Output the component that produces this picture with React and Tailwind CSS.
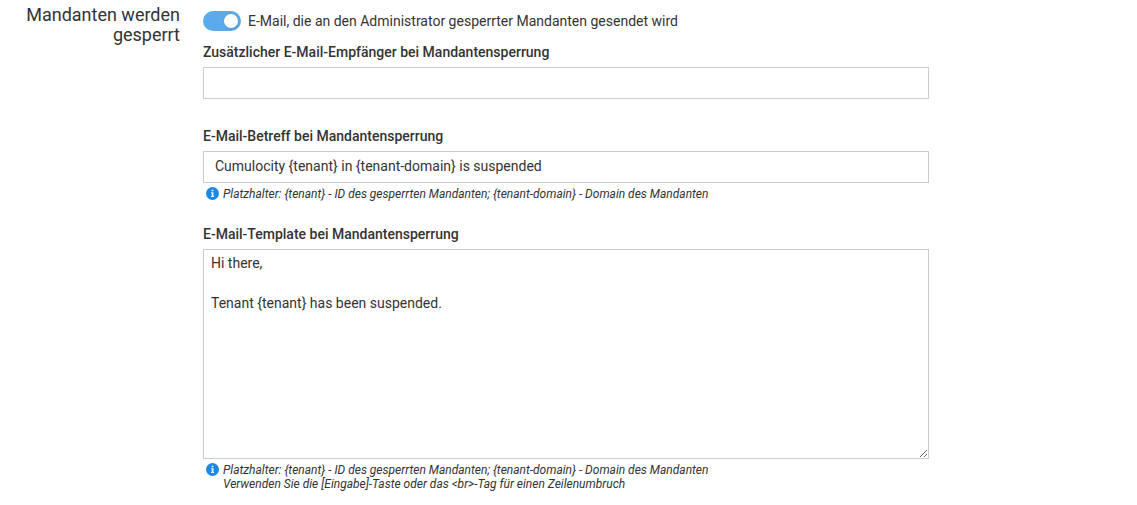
import React from "react";

function InfoIcon() {
  return (
    <svg className="size-[13px] shrink-0" viewBox="0 0 13 13" aria-hidden="true">
      <circle cx="6.5" cy="6.5" r="6.5" fill="#1c88e5" />
      <path d="M5.6 2.8h1.9v1.5H5.6zM5 5.2h2.5v3.9h.6v1H5v-1h.7V6.2H5z" fill="#e8f3fc" />
    </svg>
  );
}

function Hint({ id, children }) {
  return (
    <div id={id} className="mt-1 flex gap-1 pl-[3px] text-[12px] leading-[14px] italic">
      <InfoIcon />
      <div>{children}</div>
    </div>
  );
}

const label = "block text-[14px] leading-5 font-medium";
const field =
  "block w-full border border-[#c9cdd1] bg-white text-[14px] leading-5 text-[#333] outline-none focus:border-[#1776bf]";

export default function App() {
  return (
    <main className="flex gap-[23px] bg-white pt-[5px] pr-4 pl-4 font-[Roboto,sans-serif] text-[#333]">
      <h2 className="w-[164px] shrink-0 text-right text-[18px] leading-5">
        Mandanten werden gesperrt
      </h2>
      <form className="max-w-[726px] min-w-0 flex-1 pt-[6px]">
        <label className="flex items-center gap-[7px] text-[14px] leading-[18px]">
          <input type="checkbox" role="switch" defaultChecked className="peer sr-only" />
          <span className="flex h-5 w-[38px] shrink-0 items-center rounded-full bg-[#aaa] p-[3px] peer-checked:justify-end peer-checked:bg-[#5baaec]">
            <span className="size-[14px] rounded-full bg-white shadow-sm" />
          </span>
          E-Mail, die an den Administrator gesperrter Mandanten gesendet wird
        </label>

        <div className="mt-[11px]">
          <label htmlFor="recipient" className={label}>
            Zusätzlicher E-Mail-Empfänger bei Mandantensperrung
          </label>
          <input id="recipient" type="email" className={`${field} mt-[5px] h-8 px-[11px]`} />
        </div>

        <div className="mt-[27px]">
          <label htmlFor="subject" className={label}>
            E-Mail-Betreff bei Mandantensperrung
          </label>
          <input
            id="subject"
            type="text"
            aria-describedby="subject-hint"
            defaultValue="Cumulocity {tenant} in {tenant-domain} is suspended"
            className={`${field} mt-[5px] h-8 px-[11px] pb-[2px]`}
          />
          <Hint id="subject-hint">
            Platzhalter: {"{tenant}"} - ID des gesperrten Mandanten; {"{tenant-domain}"} - Domain des Mandanten
          </Hint>
        </div>

        <div className="mt-[23px]">
          <label htmlFor="template" className={label}>
            E-Mail-Template bei Mandantensperrung
          </label>
          <textarea
            id="template"
            rows={10}
            aria-describedby="template-hint"
            defaultValue={"Hi there,\n\nTenant {tenant} has been suspended."}
            className={`${field} mt-[5px] h-[210px] resize px-[7px] py-[3px]`}
          />
          <Hint id="template-hint">
            Platzhalter: {"{tenant}"} - ID des gesperrten Mandanten; {"{tenant-domain}"} - Domain des Mandanten
            <br />
            Verwenden Sie die [Eingabe]-Taste oder das &lt;br&gt;-Tag für einen Zeilenumbruch
          </Hint>
        </div>
      </form>
    </main>
  );
}
